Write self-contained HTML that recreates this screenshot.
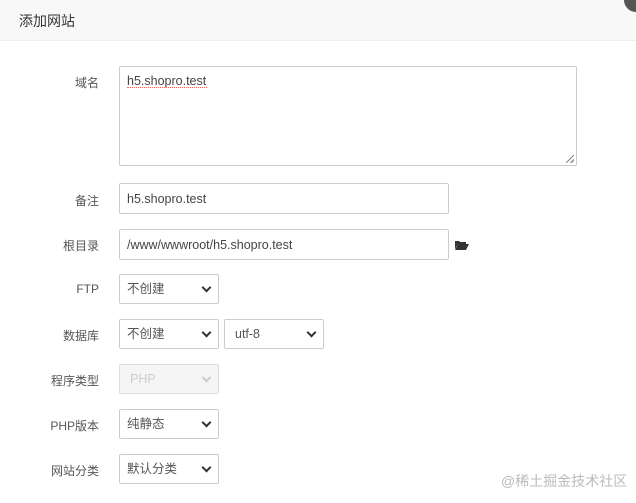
<!DOCTYPE html>
<html><head><meta charset="utf-8"><style>
body{margin:0;width:636px;height:503px;overflow:hidden;background:#fff;font-family:"Liberation Sans","Noto Sans CJK SC",sans-serif;font-size:12px;color:#555;position:relative}
.hd{position:absolute;left:0;top:0;width:636px;height:40px;background:#f8f8f8;border-bottom:1px solid #eee}
.hd span{position:absolute;left:19px;top:11px;font-size:14px;color:#333}
.close{position:absolute;left:624px;top:-12px;width:24px;height:24px;border-radius:50%;background:#555}
.lb{position:absolute;right:537px;font-size:12px;color:#555;white-space:nowrap}
.bx{position:absolute;box-sizing:border-box;border:1px solid #ccc;border-radius:2px;background:#fff;color:#555;font-size:12.5px;padding-left:7px}
.sel{height:30px;line-height:28px}
.sel:after{content:"";position:absolute;right:8px;top:9px;width:5px;height:5px;border-right:2px solid #333;border-bottom:2px solid #333;transform:rotate(45deg)}
.dis{background:#f5f5f5;color:#ccc;border-color:#ddd}
.dis:after{border-color:#ccc}
.wm{position:absolute;left:501px;top:471px;font-size:14px;color:#bbb}
</style></head><body>
<div class="hd"><span>添加网站</span></div><div class="close"></div>
<div class="lb" style="top:74px">域名</div>
<div class="bx" style="left:119px;top:66px;width:458px;height:100px;padding-top:7px;color:#444">h5.shopro.test
<div style="position:absolute;left:7px;top:20px;width:80px;border-bottom:1px dotted #e66"></div>
<div style="position:absolute;right:2px;bottom:2px;width:8px;height:8px;background:linear-gradient(135deg,transparent 45%,#888 45%,#888 55%,transparent 55%,transparent 75%,#888 75%,#888 85%,transparent 85%)"></div></div>
<div class="lb" style="top:192px">备注</div>
<div class="bx" style="left:119px;top:183px;width:330px;height:31px;line-height:31px;color:#444">h5.shopro.test</div>
<div class="lb" style="top:237px">根目录</div>
<div class="bx" style="left:119px;top:229px;width:330px;height:31px;line-height:31px;color:#444">/www/wwwroot/h5.shopro.test</div>
<svg style="position:absolute;left:454px;top:239px" width="16" height="12" viewBox="0 0 16 12"><path d="M1 2h4l1 1h6v2H4L1 10z" fill="#333"/><path d="M4 5h11l-3 6H1z" fill="#333"/></svg>
<div class="lb" style="top:282px">FTP</div>
<div class="bx sel" style="left:119px;top:274px;width:100px">不创建</div>
<div class="lb" style="top:327px">数据库</div>
<div class="bx sel" style="left:119px;top:319px;width:100px">不创建</div>
<div class="bx sel" style="left:224px;top:319px;width:100px;padding-left:10px">utf-8</div>
<div class="lb" style="top:372px">程序类型</div>
<div class="bx sel dis" style="left:119px;top:364px;width:100px;padding-left:10px">PHP</div>
<div class="lb" style="top:417px">PHP版本</div>
<div class="bx sel" style="left:119px;top:409px;width:100px">纯静态</div>
<div class="lb" style="top:462px">网站分类</div>
<div class="bx sel" style="left:119px;top:454px;width:100px">默认分类</div>
<div class="wm">@稀土掘金技术社区</div>
</body></html>
